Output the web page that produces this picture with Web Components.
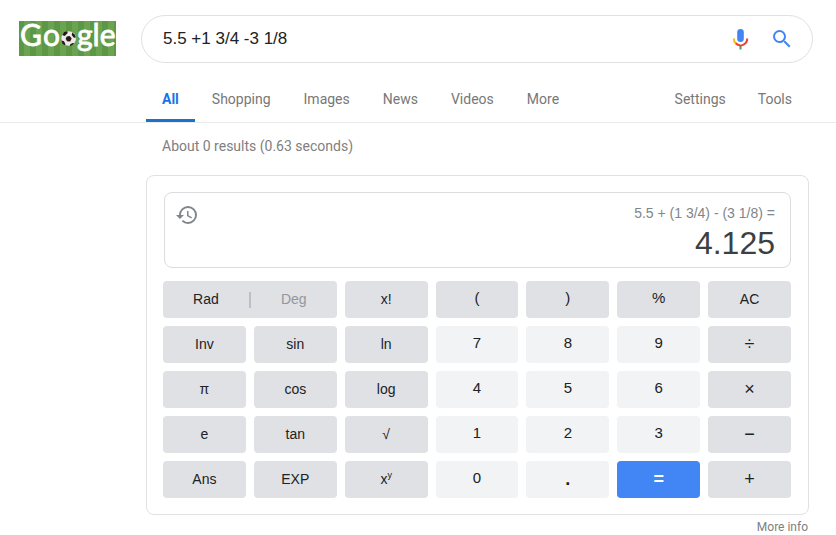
<!DOCTYPE html>
<html lang="en">
<head>
<meta charset="utf-8">
<title>5.5 +1 3/4 -3 1/8 - Google Search</title>
<style>
  body { margin: 0; background: #fff; color: #222; font-family: "Liberation Sans", Arial, sans-serif; }
</style>
</head>
<body>
<search-page>
  <search-header slot="header" query="5.5 +1 3/4 -3 1/8"></search-header>
  <nav-bar slot="header">
    <nav-tab active>All</nav-tab>
    <nav-tab>Shopping</nav-tab>
    <nav-tab>Images</nav-tab>
    <nav-tab>News</nav-tab>
    <nav-tab>Videos</nav-tab>
    <nav-tab>More</nav-tab>
    <nav-tab slot="tools">Settings</nav-tab>
    <nav-tab slot="tools">Tools</nav-tab>
  </nav-bar>
  <result-stats>About 0 results (0.63 seconds)</result-stats>
  <calc-card>
    <calc-display slot="display" expression="5.5 + (1 3/4) - (3 1/8) =">4.125</calc-display>
    <angle-toggle></angle-toggle>
    <calc-key>x!</calc-key>
    <calc-key kind="sign">(</calc-key>
    <calc-key kind="sign">)</calc-key>
    <calc-key kind="sign">%</calc-key>
    <calc-key>AC</calc-key>
    <calc-key>Inv</calc-key>
    <calc-key>sin</calc-key>
    <calc-key>ln</calc-key>
    <calc-key kind="digit">7</calc-key>
    <calc-key kind="digit">8</calc-key>
    <calc-key kind="digit">9</calc-key>
    <calc-key kind="operator">÷</calc-key>
    <calc-key>π</calc-key>
    <calc-key>cos</calc-key>
    <calc-key>log</calc-key>
    <calc-key kind="digit">4</calc-key>
    <calc-key kind="digit">5</calc-key>
    <calc-key kind="digit">6</calc-key>
    <calc-key kind="operator">×</calc-key>
    <calc-key>e</calc-key>
    <calc-key>tan</calc-key>
    <calc-key>√</calc-key>
    <calc-key kind="digit">1</calc-key>
    <calc-key kind="digit">2</calc-key>
    <calc-key kind="digit">3</calc-key>
    <calc-key kind="operator">−</calc-key>
    <calc-key>Ans</calc-key>
    <calc-key>EXP</calc-key>
    <calc-key sup="y">x</calc-key>
    <calc-key kind="digit">0</calc-key>
    <calc-key kind="point">.</calc-key>
    <calc-key kind="equals">=</calc-key>
    <calc-key kind="operator">+</calc-key>
  </calc-card>
  <more-info>More info</more-info>
</search-page>

<script>
const define = (name, html, setup) => {
  const template = document.createElement('template');
  template.innerHTML = html;
  customElements.define(name, class extends HTMLElement {
    connectedCallback() {
      if (this.shadowRoot) return;
      const root = this.attachShadow({ mode: 'open' });
      root.append(template.content.cloneNode(true));
      if (setup) setup(this, root);
    }
  });
};

define('search-page', `
  <style>
    :host { display: block; }
    main { margin: 0 27px 0 146px; }
  </style>
  <header><slot name="header"></slot></header>
  <main><slot></slot></main>
`);

define('search-header', `
  <style>
    :host { display: flex; align-items: center; gap: 25px; padding: 15px 23px 0 19px; }
    .logo { display: block; flex: none; padding-bottom: 2px; }
    .logo svg { display: block; overflow: visible; }
    form { flex: 1; display: flex; align-items: center; gap: 18px; box-sizing: border-box; height: 48px;
           padding: 0 18px 0 21px; border: 1px solid #dfe1e5; border-radius: 24px; background: #fff; }
    input { flex: 1; min-width: 0; border: 0; padding: 0; outline: 0; background: none;
            font: 17px/24px "Liberation Sans", Arial, sans-serif; color: #222; }
    button { display: block; border: 0; padding: 0; background: none; width: 24px; height: 24px; cursor: pointer; }
    button svg { display: block; }
  </style>
  <a class="logo" href="#" aria-label="Google home">
    <svg width="97" height="35" viewBox="0 0 97 35">
      <defs>
        <pattern id="grass" width="12" height="35" patternUnits="userSpaceOnUse">
          <rect width="12" height="35" fill="#5c9745"/><rect x="5" width="6" height="35" fill="#6ba350"/>
        </pattern>
      </defs>
      <rect width="97" height="35" fill="url(#grass)"/>
      <g fill="#fff" stroke="#fff" font-family="Lato, sans-serif" font-size="30" stroke-width=".8">
        <text x="1" y="25">G</text><text x="24" y="25">o</text>
        <text x="58" y="25">gle</text>
      </g>
      <g transform="translate(-.8 -1)">
        <circle cx="50.500" cy="18.500" r="7.300" fill="#eee8e6"/>
        <g fill="#211a19">
          <path d="M48.500 16.500l3-.5 2 2.500-1.500 3-3.200-.3-1.300-2.500z"/>
          <path d="M44 15l2-3 3-.8.5 1.800-3 3zM54 12.500l2.500 2 1.200 3-2 .3-2.200-2.800zM43.500 20.500l2.300.8 1.500 3-1 1-2.200-1.800zM52 24.300l2.500-1.300 1.500.3-2 2-2.300.6z"/>
        </g>
      </g>
    </svg>
  </a>
  <form role="search" onsubmit="return false">
    <input type="text" aria-label="Search">
    <button type="button" aria-label="Search by voice">
      <svg width="24" height="24" viewBox="0 0 24 24">
        <rect x="9.200" y="2" width="6.600" height="13" rx="3.300" fill="#4285f4"/>
        <path d="M11.500 18.500h2V22.500h-2z" fill="#34a853"/>
        <path d="M5.800 11.500a6.700 6.700 0 0 0 2.200 5.100" fill="none" stroke="#fbbc05" stroke-width="2"/>
        <path d="M7.700 16.300a6.700 6.700 0 0 0 11.500-4.800" fill="none" stroke="#ea4335" stroke-width="2"/>
      </svg>
    </button>
    <button type="submit" aria-label="Search">
      <svg width="24" height="24" viewBox="0 0 24 24"><path fill="#4285f4" d="M15.500 14h-.79l-.28-.27A6.471 6.471 0 0 0 16 9.500 6.500 6.500 0 1 0 9.500 16c1.610 0 3.090-.59 4.230-1.570l.27.28v.79l5 4.990L20.490 19l-4.990-5zm-6 0C7.010 14 5 11.990 5 9.500S7.010 5 9.500 5 14 7.010 14 9.500 11.990 14 9.500 14z"/></svg>
    </button>
  </form>
`, (host, root) => { root.querySelector('input').value = host.getAttribute('query'); });

define('nav-bar', `
  <style>
    :host { display: block; border-bottom: 1px solid #ebebeb; }
    nav { display: flex; justify-content: space-between; padding: 14px 28px 0 146px; }
    div { display: flex; }
    .tabs { gap: 1px; }
  </style>
  <nav><div class="tabs"><slot></slot></div><div><slot name="tools"></slot></div></nav>
`);

define('nav-tab', `
  <style>
    a { display: block; padding: 12px 16px 10px; border-bottom: 3px solid transparent;
        font: 14px/20px Roboto, sans-serif; color: #777; text-decoration: none; }
    :host { display: block; }
    :host([active]) a { color: #1a73e8; border-color: #1a73c8; font-weight: 700; }
  </style>
  <a href="#"><slot></slot></a>
`);

define('result-stats', `
  <style>:host { display: block; padding: 13px 16px 0; font: 14px/20px Roboto, sans-serif; color: #808080; }</style>
  <slot></slot>
`);

define('calc-card', `
  <style>
    :host { display: block; margin-top: 19px; padding: 16px 17px 16px 16px; border: 1px solid #dfe1e5; border-radius: 8px; }
    .keys { display: grid; grid-template-columns: repeat(7, minmax(0, 1fr)); grid-auto-rows: 37px; gap: 8px; margin-top: 13px; }
  </style>
  <slot name="display"></slot>
  <div class="keys"><slot></slot></div>
`);

define('calc-display', `
  <style>
    :host { display: flex; justify-content: space-between; align-items: flex-start; box-sizing: border-box;
            padding: 10px 15px 3px 10px; margin-left: 1px; border: 1px solid #dadce0; border-radius: 8px; }
    button { border: 0; padding: 0; background: none; width: 24px; height: 24px; cursor: pointer; }
    svg { display: block; }
    output { display: block; text-align: right; }
    .expression { font-size: 14px; line-height: 20px; color: #80868b; }
    .result { font-size: 32px; line-height: 41px; color: #3c4043; }
  </style>
  <button type="button" aria-label="History">
    <svg width="24" height="24" viewBox="0 0 24 24"><path fill="#80868b" d="M13 3a9 9 0 0 0-9 9H1l3.890 3.890.07.14L9 12H6c0-3.870 3.130-7 7-7s7 3.130 7 7-3.130 7-7 7c-1.930 0-3.680-.79-4.940-2.060l-1.420 1.420A8.954 8.954 0 0 0 13 21a9 9 0 0 0 0-18zm-1 5v5l4.280 2.540.72-1.210-3.500-2.080V8H12z"/></svg>
  </button>
  <output>
    <div class="expression"></div>
    <div class="result"><slot></slot></div>
  </output>
`, (host, root) => { root.querySelector('.expression').textContent = host.getAttribute('expression'); });

define('angle-toggle', `
  <style>
    :host { grid-column: span 2; display: grid; grid-template-columns: 1fr 2px 1fr; align-items: center;
            background: #dfe1e5; border-radius: 4px; }
    button { border: 0; padding: 0 0 1px; background: none; font: 14px/20px "Liberation Sans", Arial, sans-serif; color: #202124; cursor: pointer; }
    .off { color: #94979b; }
    i { height: 16px; background: #bcbfc3; }
  </style>
  <button type="button" aria-pressed="true">Rad</button><i></i><button type="button" class="off" aria-pressed="false">Deg</button>
`);

define('calc-key', `
  <style>
    :host { display: grid; }
    button { border: 0; padding: 0 0 1px; border-radius: 4px; background: #dfe1e5; color: #202124; cursor: pointer;
             font: 14px/20px "Liberation Sans", Arial, sans-serif; }
    sup { font-size: 9px; line-height: 0; }
    sup:empty { display: none; }
    :host([kind="digit"]) button, :host([kind="sign"]) button { font-size: 15px; padding-bottom: 3px; }
    :host([kind="digit"]) button, :host([kind="point"]) button { background: #f1f3f4; }
    :host([kind="operator"]) button { font-size: 18px; }
    :host([kind="point"]) button { font-size: 18px; font-weight: 700; }
    :host([kind="equals"]) button { font-size: 18px; font-weight: 700; background: #4285f4; color: #fff; }
  </style>
  <button type="button"><slot></slot><sup></sup></button>
`, (host, root) => { root.querySelector('sup').textContent = host.getAttribute('sup') || ''; });

define('more-info', `
  <style>
    :host { display: flex; justify-content: flex-end; padding: 4px 1px 0; }
    a { font: 12px/16px Roboto, sans-serif; color: #808080; text-decoration: none; }
  </style>
  <a href="#"><slot></slot></a>
`);
</script>
</body>
</html>
